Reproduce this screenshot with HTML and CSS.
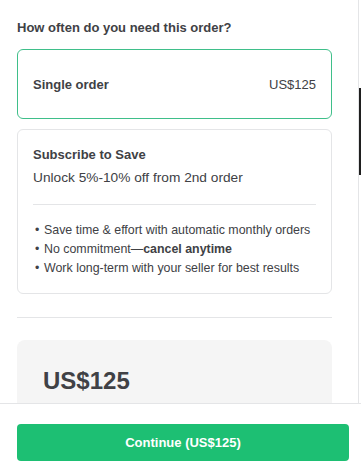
FILE: index.html
```html
<!DOCTYPE html>
<html lang="en">
  <head>
    <meta charset="UTF-8">
    <title>Order frequency</title>
    <link rel="stylesheet" href="styles.css">
  </head>
  <body>
    <div class="screen">
      <div class="viewport">
        <div class="drawer">
          <h2 class="question">How often do you need this order?</h2>

          <!-- selected option -->
          <div class="option option-selected">
            <span class="option-name">Single order</span>
            <span class="option-price">US$125</span>
          </div>

          <div class="option option-subscribe">
            <div class="sub-title">Subscribe to Save</div>
            <div class="sub-text">Unlock 5%-10% off from 2nd order</div>
            <hr class="sub-divider">
            <ul class="perks">
              <li>Save time &amp; effort with automatic monthly orders</li>
              <li><span>No commitment—<b>cancel anytime</b></span></li>
              <li>Work long-term with your seller for best results</li>
            </ul>
          </div>

          <hr class="section-divider">

          <div class="summary">
            <div class="summary-price">US$125</div>
          </div>
        </div>
        <div class="edge"><div class="edge-thumb"></div></div>
      </div>

      <div class="footer">
        <button class="continue">Continue (US$125)</button>
      </div>
    </div>
  </body>
</html>
```

FILE: styles.css
```css
body {
  margin: 0;
  font-family: 'Liberation Sans', Arial, sans-serif;
  color: #404145;
  background: #fff;
}

.screen {
  height: 461px;
  display: flex;
  flex-direction: column;
  overflow: hidden;
}

.viewport {
  height: 403px;
  flex: none;
  display: flex;
  overflow: hidden;
}

.drawer {
  width: 359px;
  flex: none;
  box-sizing: border-box;
  padding: 19px 26px 0 17px;
  border-right: 1px solid #e4e5e7;
}

.edge {
  width: 2px;
  flex: none;
}

.edge-thumb {
  margin-top: 88px;
  height: 87px;
  background: #1f1f1f;
}

.question {
  margin: 0 0 12px;
  font-size: 13px;
  line-height: 18px;
  font-weight: 700;
}

.option {
  border: 1px solid #e4e5e7;
  border-radius: 6px;
}

.option-selected {
  height: 70px;
  box-sizing: border-box;
  display: flex;
  justify-content: space-between;
  align-items: center;
  padding: 0 15px;
  border-color: #3fbf8a;
  font-size: 13px;
}

.option-name {
  font-weight: 700;
}

.option-subscribe {
  margin-top: 10px;
  padding: 16px 15px 15px;
}

.sub-title {
  font-size: 13px;
  line-height: 18px;
  font-weight: 700;
  margin-bottom: 4px;
}

.sub-text {
  font-size: 13.7px;
  line-height: 20px;
}

.sub-divider {
  border: none;
  border-top: 1px solid #e4e5e7;
  margin: 16px 0 16px;
}

.perks {
  list-style: none;
  margin: 0;
  padding: 0;
  font-size: 12.4px;
  line-height: 19px;
}

.perks li {
  display: flex;
}

.perks li::before {
  content: "•";
  width: 9px;
  padding-left: 2px;
  flex: none;
}

.section-divider {
  border: none;
  border-top: 1px solid #e4e5e7;
  margin: 23px 0 22px;
}

.summary {
  background: #f5f5f5;
  border-radius: 8px;
  padding: 26px 26px 30px;
}

.summary-price {
  font-size: 24px;
  line-height: 30px;
  font-weight: 700;
}

.footer {
  flex: none;
  border-top: 1px solid #e4e5e7;
  padding: 20px 12px 0 17px;
}

.continue {
  display: block;
  width: 100%;
  height: 37px;
  border: none;
  border-radius: 4px;
  background: #1dbf73;
  color: #fff;
  font-family: inherit;
  font-size: 13px;
  font-weight: 700;
  cursor: pointer;
}
```
